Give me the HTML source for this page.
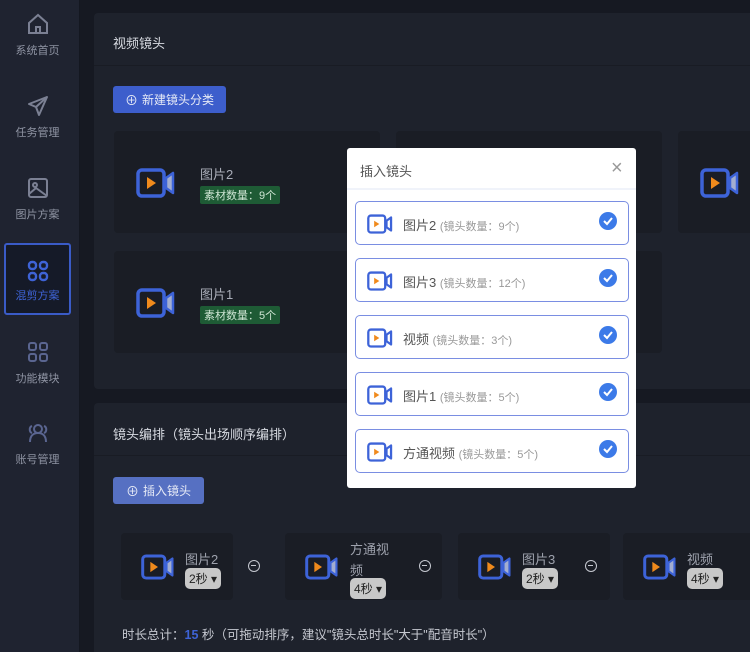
<!DOCTYPE html>
<html><head><meta charset="utf-8"><style>
*{margin:0;padding:0;box-sizing:border-box}
html,body{width:750px;height:652px;overflow:hidden}
body{background:#161922;font-family:"Liberation Sans","Noto Sans CJK SC",sans-serif;position:relative;color:#c9ccd4}
.a{position:absolute}
.side{left:0;top:0;width:80px;height:652px;background:#1f2330;border-right:1px solid #141720}
.si{position:absolute;left:4px;width:67px;height:72px;text-align:center;font-size:11px;color:#8f94a3}
.si svg{display:block;margin:0 auto}
.si.act{border:2px solid #3a5bc7;border-radius:3px;color:#3e63d6;background:#151a28}
.panel{background:#1e222c;border-radius:4px}
.hd{font-size:13px;color:#d8dbe2}
.line{height:1px;background:#191c24}
.btn{border-radius:3px;color:#e6eaf6;font-size:12px;display:flex;align-items:center;justify-content:center;gap:4px}
.card{background:#1a1d25;border-radius:4px}
.tag{background:#1e5b35;color:#cfe6d4;font-size:11px;padding:1px 4px;border-radius:2px}
.modal{left:347px;top:148px;width:289px;height:340px;background:#fff;border-radius:3px}
.it{position:absolute;left:8px;width:274px;height:44px;border:1px solid #7a8ee2;border-radius:5px}
.it .cm{position:absolute;left:11px;top:12px}
.it .t{position:absolute;left:47px;top:13px;font-size:13px;color:#555}
.it .t span{font-size:11px;color:#999}
.ck{position:absolute;right:11px;top:10px;width:18px;height:18px;border-radius:50%;background:#3c7ae8}
.ck svg{position:absolute;left:0;top:0}
.sel{background:#c8c8c8;color:#222;border-radius:5px;font-size:12px;padding:2px 4px;display:inline-block}
.minus{width:12px;height:12px;border:1.6px solid #c5c8d0;border-radius:50%}
.minus:after{content:"";position:absolute;left:2px;top:3.8px;width:5px;height:1.6px;background:#c5c8d0}
.bt{font-size:13px;color:#9ea2ad}
</style></head><body>
<svg width="0" height="0" style="position:absolute"><defs>
<symbol id="cam" viewBox="0 0 40 30"><rect x="2" y="2" width="26" height="26" rx="4" fill="#1a1d25" stroke="#3d63d8" stroke-width="3.5"/><path d="M11 9 L20 15 L11 21Z" fill="#f08a1c"/><path d="M30 10 L37 5 V25 L30 20Z" fill="#a3aed0" stroke="#3d63d8" stroke-width="2.5" stroke-linejoin="round"/></symbol>
<symbol id="camw" viewBox="0 0 40 30"><rect x="2" y="2" width="26" height="26" rx="4" fill="#fff" stroke="#3d63d8" stroke-width="3.5"/><path d="M11 10 L19 15 L11 20Z" fill="#f08a1c"/><path d="M30 10 L37 5 V25 L30 20Z" fill="#fff" stroke="#3d63d8" stroke-width="3.5" stroke-linejoin="round"/></symbol>
</defs></svg>

<div class="a side">
 <div class="si" style="top:12px"><svg width="24" height="24" viewBox="0 0 24 24" fill="none" stroke="#7b8093" stroke-width="2"><path d="M3 11 L12 3 L21 11 V21 H3Z"/><path d="M10 21 V15 H14 V21"/></svg><div style="margin-top:6px">系统首页</div></div>
 <div class="si" style="top:94px"><svg width="24" height="24" viewBox="0 0 24 24" fill="none" stroke="#7b8093" stroke-width="2" stroke-linejoin="round"><path d="M21 3 L3 10 L10 13 L13 21Z"/><path d="M10 13 L21 3"/></svg><div style="margin-top:6px">任务管理</div></div>
 <div class="si" style="top:176px"><svg width="24" height="24" viewBox="0 0 24 24" fill="none" stroke="#7b8093" stroke-width="2"><rect x="3" y="3" width="18" height="18" rx="2"/><circle cx="9" cy="9" r="2"/><path d="M3 18 L10 12 L21 20"/></svg><div style="margin-top:6px">图片方案</div></div>
 <div class="si act" style="top:243px"><svg width="24" height="24" viewBox="0 0 24 24" fill="none" stroke="#3e63d6" stroke-width="2.4" style="margin-top:14px"><rect x="3" y="3" width="7" height="7" rx="3"/><rect x="14" y="3" width="7" height="7" rx="3"/><rect x="3" y="14" width="7" height="7" rx="3"/><rect x="14" y="14" width="7" height="7" rx="3"/></svg><div style="margin-top:4px">混剪方案</div></div>
 <div class="si" style="top:340px"><svg width="24" height="24" viewBox="0 0 24 24" fill="none" stroke="#5a6590" stroke-width="2"><rect x="3" y="3" width="7" height="7" rx="2"/><rect x="14" y="3" width="7" height="7" rx="2"/><rect x="3" y="14" width="7" height="7" rx="2"/><rect x="14" y="14" width="7" height="7" rx="2"/></svg><div style="margin-top:6px">功能模块</div></div>
 <div class="si" style="top:421px"><svg width="24" height="24" viewBox="0 0 24 24" fill="none" stroke="#5a6590" stroke-width="2"><circle cx="12" cy="8" r="4"/><path d="M4 21 C4 14 8 12 12 12 C16 12 20 14 20 21"/><path d="M6 5 C3 6 3 11 6 12 M18 5 C21 6 21 11 18 12"/></svg><div style="margin-top:6px">账号管理</div></div>
</div>

<div class="a panel" style="left:94px;top:13px;width:660px;height:376px">
 <div class="a hd" style="left:19px;top:20px">视频镜头</div>
 <div class="a line" style="left:0;top:52px;width:660px"></div>
 <div class="a btn" style="left:19px;top:73px;width:113px;height:27px;background:#3d5ecc"><span style="font-size:13px">⊕</span>新建镜头分类</div>
</div>
<div class="a card" style="left:114px;top:131px;width:266px;height:102px"></div>
<div class="a card" style="left:396px;top:131px;width:266px;height:102px"></div>
<div class="a card" style="left:678px;top:131px;width:80px;height:102px"></div>
<div class="a card" style="left:114px;top:251px;width:266px;height:102px"></div>
<div class="a card" style="left:396px;top:251px;width:266px;height:102px"></div>
<svg class="a" style="left:136px;top:168px" width="40" height="30"><use href="#cam"/></svg>
<svg class="a" style="left:136px;top:288px" width="40" height="30"><use href="#cam"/></svg>
<svg class="a" style="left:700px;top:168px" width="40" height="30"><use href="#cam"/></svg>
<div class="a" style="left:200px;top:164px;font-size:13px;color:#a9adb8">图片2</div>
<div class="a tag" style="left:200px;top:186px">素材数量：9个</div>
<div class="a" style="left:200px;top:284px;font-size:13px;color:#a9adb8">图片1</div>
<div class="a tag" style="left:200px;top:306px">素材数量：5个</div>

<div class="a panel" style="left:94px;top:403px;width:660px;height:260px">
 <div class="a hd" style="left:19px;top:21px">镜头编排（镜头出场顺序编排）</div>
 <div class="a line" style="left:0;top:52px;width:660px"></div>
 <div class="a btn" style="left:19px;top:74px;width:91px;height:27px;background:#5670c2"><span style="font-size:13px">⊕</span>插入镜头</div>
</div>
<div class="a card" style="left:121px;top:533px;width:112px;height:67px"></div>
<div class="a card" style="left:285px;top:533px;width:157px;height:67px"></div>
<div class="a card" style="left:458px;top:533px;width:152px;height:67px"></div>
<div class="a card" style="left:623px;top:533px;width:140px;height:67px"></div>
<svg class="a" style="left:141px;top:554px" width="34" height="26"><use href="#cam"/></svg>
<svg class="a" style="left:305px;top:554px" width="34" height="26"><use href="#cam"/></svg>
<svg class="a" style="left:478px;top:554px" width="34" height="26"><use href="#cam"/></svg>
<svg class="a" style="left:643px;top:554px" width="34" height="26"><use href="#cam"/></svg>
<div class="a bt" style="left:185px;top:549px">图片2</div><div class="a sel" style="left:185px;top:568px">2秒 ▾</div><div class="a minus" style="left:248px;top:560px"></div>
<div class="a bt" style="left:350px;top:539px;line-height:21px">方通视<br>频</div><div class="a sel" style="left:350px;top:578px">4秒 ▾</div><div class="a minus" style="left:419px;top:560px"></div>
<div class="a bt" style="left:522px;top:549px">图片3</div><div class="a sel" style="left:522px;top:568px">2秒 ▾</div><div class="a minus" style="left:585px;top:560px"></div>
<div class="a bt" style="left:687px;top:549px">视频</div><div class="a sel" style="left:687px;top:568px">4秒 ▾</div>
<div class="a" style="left:122px;top:624px;font-size:12.5px;color:#c6c9d1">时长总计：<b style="color:#3e63d6">15</b> 秒（可拖动排序，建议"镜头总时长"大于"配音时长"）</div>

<div class="a modal">
 <div class="a" style="left:13px;top:13px;font-size:13px;color:#555">插入镜头</div>
 <div class="a" style="left:264px;top:9px;font-size:20px;color:#999">×</div>
 <div class="a" style="left:0;top:40px;width:289px;height:2px;background:#f0f3fa"></div>
 <div class="it" style="top:53px"><svg class="cm" width="26" height="20"><use href="#camw"/></svg><div class="t">图片2 <span>(镜头数量：9个)</span></div><div class="ck"><svg width="18" height="18" viewBox="0 0 18 18"><path d="M5 9 L8 12 L13 6" fill="none" stroke="#fff" stroke-width="2"/></svg></div></div>
 <div class="it" style="top:110px"><svg class="cm" width="26" height="20"><use href="#camw"/></svg><div class="t">图片3 <span>(镜头数量：12个)</span></div><div class="ck"><svg width="18" height="18" viewBox="0 0 18 18"><path d="M5 9 L8 12 L13 6" fill="none" stroke="#fff" stroke-width="2"/></svg></div></div>
 <div class="it" style="top:167px"><svg class="cm" width="26" height="20"><use href="#camw"/></svg><div class="t">视频 <span>(镜头数量：3个)</span></div><div class="ck"><svg width="18" height="18" viewBox="0 0 18 18"><path d="M5 9 L8 12 L13 6" fill="none" stroke="#fff" stroke-width="2"/></svg></div></div>
 <div class="it" style="top:224px"><svg class="cm" width="26" height="20"><use href="#camw"/></svg><div class="t">图片1 <span>(镜头数量：5个)</span></div><div class="ck"><svg width="18" height="18" viewBox="0 0 18 18"><path d="M5 9 L8 12 L13 6" fill="none" stroke="#fff" stroke-width="2"/></svg></div></div>
 <div class="it" style="top:281px"><svg class="cm" width="26" height="20"><use href="#camw"/></svg><div class="t">方通视频 <span>(镜头数量：5个)</span></div><div class="ck"><svg width="18" height="18" viewBox="0 0 18 18"><path d="M5 9 L8 12 L13 6" fill="none" stroke="#fff" stroke-width="2"/></svg></div></div>
</div>
</body></html>
